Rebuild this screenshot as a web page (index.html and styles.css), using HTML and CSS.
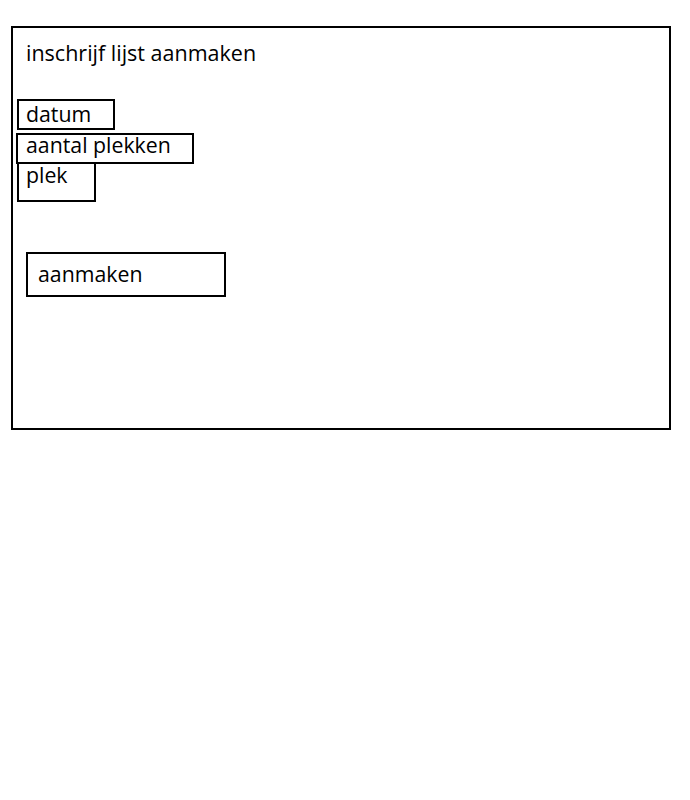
FILE: index.html
```html
<!DOCTYPE html>
<html>
<head>
<meta charset="utf-8">
<link rel="stylesheet" href="styles.css">
</head>
<body>
<div class="frame">
  <div class="title">inschrijf lijst aanmaken</div>
  <div class="fields">
    <div class="field field-datum">datum</div>
    <div class="field field-aantal">aantal plekken</div>
    <div class="field field-plek">plek</div>
  </div>
  <div class="button">aanmaken</div>
</div>
</body>
</html>
```

FILE: styles.css
```css
html, body {
  margin: 0;
  padding: 0;
  background: #fff;
}
body {
  font-family: "Open Sans", "Liberation Sans", sans-serif;
  font-size: 21.3px;
  color: #000;
}
.frame {
  box-sizing: border-box;
  margin: 26px 0 0 11px;
  width: 660px;
  height: 404px;
  border: 2px solid #000;
}
.title {
  margin: 10px 0 0 13px;
  line-height: 30px;
  font-size: 21.5px;
}
.fields {
  display: flex;
  flex-direction: column;
  align-items: flex-start;
  margin-top: 31px;
}
.field {
  box-sizing: border-box;
  border: 2px solid #000;
  padding-left: 7px;
  line-height: 26px;
}
.field-datum {
  margin-left: 4px;
  width: 98px;
  height: 31px;
}
.field-aantal {
  margin-top: 3px;
  margin-left: 3px;
  width: 178px;
  height: 31px;
  padding-left: 8px;
  line-height: 20px;
}
.field-plek {
  margin-top: -2px;
  margin-left: 4px;
  width: 79px;
  height: 40px;
  line-height: 21px;
}
.button {
  box-sizing: border-box;
  margin: 50px 0 0 13px;
  width: 200px;
  height: 45px;
  border: 2px solid #000;
  padding-left: 10px;
  line-height: 39px;
}
```
